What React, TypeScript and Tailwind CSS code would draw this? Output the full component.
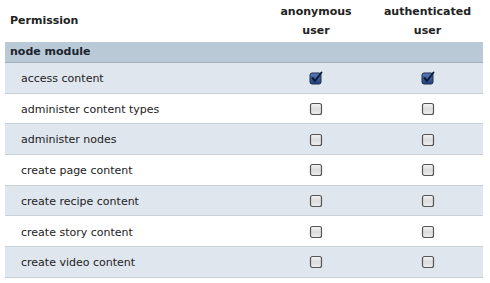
import React from "react";

const rows: { name: string; anon: boolean; auth: boolean }[] = [
  { name: "access content", anon: true, auth: true },
  { name: "administer content types", anon: false, auth: false },
  { name: "administer nodes", anon: false, auth: false },
  { name: "create page content", anon: false, auth: false },
  { name: "create recipe content", anon: false, auth: false },
  { name: "create story content", anon: false, auth: false },
  { name: "create video content", anon: false, auth: false },
];

function Box({ checked }: { checked: boolean }) {
  if (checked) {
    return (
      <svg width="14" height="14" viewBox="0 0 14 14">
        <defs>
          <linearGradient id="cg" x1="0" y1="0" x2="0" y2="1">
            <stop offset="0" stopColor="#5a7fb8" />
            <stop offset="1" stopColor="#1f3f7a" />
          </linearGradient>
        </defs>
        <rect x="1" y="2" width="11" height="11" rx="2" fill="url(#cg)" stroke="#1c2d4d" strokeWidth="1" />
        <path d="M3.5 7 L6 10 L12.5 1.5" fill="none" stroke="#0d1a33" strokeWidth="2" strokeLinecap="round" />
      </svg>
    );
  }
  return (
    <svg width="14" height="14" viewBox="0 0 14 14">
      <defs>
        <linearGradient id="ug" x1="0" y1="0" x2="0" y2="1">
          <stop offset="0" stopColor="#f4f4f4" />
          <stop offset="0.5" stopColor="#dcdcdc" />
          <stop offset="1" stopColor="#eeeeee" />
        </linearGradient>
      </defs>
      <rect x="1.5" y="1.5" width="11" height="11" rx="2" fill="url(#ug)" stroke="#555" strokeWidth="1.2" />
    </svg>
  );
}

export default function App() {
  return (
    <div className="w-[490px] h-[283px] bg-white overflow-hidden" style={{ fontFamily: '"DejaVu Sans", Verdana, sans-serif' }}>
      <div className="ml-[5px] w-[478px]">
        <div className="flex h-[42px] items-center text-[11px] font-bold text-[#222]">
          <div className="w-[255px] pl-[5px] pt-[1px]">Permission</div>
          <div className="w-[112px] text-center leading-[19px]">anonymous<br />user</div>
          <div className="w-[111px] text-center leading-[19px]">authenticated<br />user</div>
        </div>
        <div className="h-[21px] bg-[#b9cad6] border-b border-[#9fb1bf] flex items-center pl-[5px] text-[11px] font-bold text-[#1c2430]">
          node module
        </div>
        {rows.map((r, i) => (
          <div
            key={r.name}
            className={`flex h-[30.7px] items-center border-b border-[#c8d1d9] text-[11px] text-[#222] ${i % 2 === 0 ? "bg-[#dfe6ee]" : "bg-white"}`}
          >
            <div className="w-[255px] pl-[16px] pt-[3px]">{r.name}</div>
            <div className="w-[112px] flex justify-center pt-[1px]"><Box checked={r.anon} /></div>
            <div className="w-[111px] flex justify-center pt-[1px]"><Box checked={r.auth} /></div>
          </div>
        ))}
      </div>
    </div>
  );
}
